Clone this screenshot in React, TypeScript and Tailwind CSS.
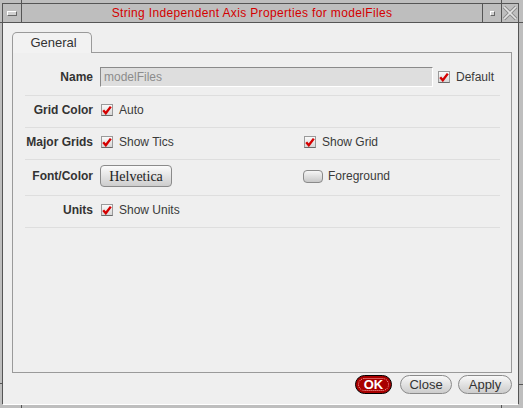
import React from 'react';

const dark = 'bg-[#555555]';

function Check() {
    return (
        <span className="inline-flex w-[12px] h-[12px] border border-[#9a9a9a] border-b-[#6a6a6a] bg-gradient-to-b from-[#fafafa] to-[#d6d6d6] items-center justify-center">
            <svg width="10" height="10" viewBox="0 0 10 10">
                <path d="M1.2 5.2 L3.8 8.2 L8.8 1.6" fill="none" stroke="#d40000" strokeWidth="2.4" />
            </svg>
        </span>
    );
}

function CheckItem({ label }: { label: string }) {
    return (
        <div className="flex items-center">
            <span className="ml-px"><Check /></span>
            <span className="ml-[6px] text-[12px] text-[#3a3a3a]">{label}</span>
        </div>
    );
}

function Row({ label, children, h = 'h-[32px]' }: { label: string; children: React.ReactNode; h?: string }) {
    return (
        <div className={`flex items-center ${h} pb-[3px] border-b border-[#dedede]`}>
            <div className="w-[68px] text-right text-[12px] font-bold text-[#333]">{label}</div>
            <div className="ml-[7px] flex-1 flex items-center">{children}</div>
        </div>
    );
}

export default function App() {
    return (
        <div className="w-[523px] h-[408px] bg-[#bebebe] flex flex-col overflow-hidden font-['Liberation_Sans',Arial,sans-serif]">
            {/* top frame strip */}
            <div className="h-[3px] flex">
                <div className="w-[21px]" />
                <div className={`w-px ${dark}`} />
                <div className="w-[479px]" />
                <div className={`w-px ${dark}`} />
            </div>

            {/* title bar */}
            <div className="h-[20px] flex border-b border-[#555555]">
                <div className="w-[2px]" />
                <div className="w-[517px] flex border-t border-l border-r border-[#555555]">
                    <div className="w-[18px] flex items-center justify-center">
                        <div className="w-[10px] h-[5px] border border-t-white border-l-white border-b-[#666] border-r-[#666] bg-[#d0d0d0]" />
                    </div>
                    <div className={`w-px ${dark}`} />
                    <div className="w-[460px] flex items-center justify-center text-[12px] text-[#d40000] tracking-[0.35px]">
                        String Independent Axis Properties for modelFiles
                    </div>
                    <div className={`w-px ${dark}`} />
                    <div className="w-[18px] flex items-center justify-center">
                        <div className="w-[5px] h-[5px] border border-t-white border-l-white border-b-[#666] border-r-[#666] bg-[#d0d0d0]" />
                    </div>
                    <div className={`w-px ${dark}`} />
                    <div className="w-[16px] flex items-center justify-center">
                        <svg width="16" height="16" viewBox="0 0 16 16">
                            <path d="M2 2 L14 14 M14 2 L2 14" stroke="#8a8a8a" strokeWidth="3.4" />
                            <path d="M2 2 L14 14 M14 2 L2 14" stroke="#e4e4e4" strokeWidth="1.6" />
                        </svg>
                    </div>
                </div>
            </div>

            {/* main */}
            <div className="h-[381px] flex">
                <div className="w-[2px] flex flex-col">
                    <div className="h-[360px]" />
                    <div className={`h-px ${dark}`} />
                </div>
                <div className={`w-px ${dark}`} />
                <div className="w-[515px] bg-[#efefef] flex flex-col pl-[9px] pt-[9px] pr-[6px]">
                    {/* tab header */}
                    <div className="flex h-[21px]">
                        <div className="w-[80px] h-[21px] border border-b-0 border-[#9a9a9a] rounded-t-[5px] bg-[#f2f2f2] flex items-center justify-center text-[13px] text-[#333] pl-[3px]">
                            General
                        </div>
                        <div className="flex-1 border-b border-[#9a9a9a]" />
                    </div>
                    {/* panel */}
                    <div className="h-[320px] border border-t-0 border-[#9a9a9a] pt-[9px] pl-[12px] pr-[11px]">
                        <Row label="Name" h="h-[34px]">
                            <div className="w-[333px] h-[20px] bg-[#dedede] border border-t-[#8a8a8a] border-l-[#8a8a8a] border-b-white border-r-white flex items-center pl-[3px] text-[12px] text-[#8c8c8c]">
                                modelFiles
                            </div>
                            <div className="ml-[4px]">
                                <CheckItem label="Default" />
                            </div>
                        </Row>
                        <Row label="Grid Color">
                            <CheckItem label="Auto" />
                        </Row>
                        <Row label="Major Grids">
                            <div className="w-[203px]">
                                <CheckItem label="Show Tics" />
                            </div>
                            <CheckItem label="Show Grid" />
                        </Row>
                        <Row label="Font/Color" h="h-[36px]">
                            <div className="w-[203px]">
                                <button className="w-[72px] h-[22px] rounded-[4px] border border-[#8a8a8a] bg-gradient-to-b from-[#fbfbfb] to-[#cdcdcd] text-[14px] text-[#222] font-['Liberation_Serif',serif] flex items-center justify-center">
                                    Helvetica
                                </button>
                            </div>
                            <div className="flex items-center">
                                <span className="w-[20px] h-[13px] rounded-[4px] border border-[#8a8a8a] bg-gradient-to-b from-[#f6f6f6] to-[#c8c8c8]" />
                                <span className="ml-[5px] text-[12px] text-[#3a3a3a]">Foreground</span>
                            </div>
                        </Row>
                        <Row label="Units">
                            <CheckItem label="Show Units" />
                        </Row>
                    </div>
                    {/* buttons */}
                    <div className="flex justify-end mt-[2px] gap-[6px]">
                        <button className="w-[37px] h-[19px] mr-[2px] rounded-full bg-[#a80000] border border-black flex items-center justify-center p-[2px]">
                            <span className="w-full h-full rounded-full border border-dotted border-[#ffb0b0] flex items-center justify-center text-white font-bold text-[13px] leading-none">OK</span>
                        </button>
                        <button className="w-[52px] h-[19px] rounded-full border border-[#8a8a8a] bg-gradient-to-b from-[#f8f8f8] to-[#cccccc] text-[13px] text-[#333] flex items-center justify-center leading-none">
                            Close
                        </button>
                        <button className="w-[54px] h-[19px] rounded-full border border-[#8a8a8a] bg-gradient-to-b from-[#f8f8f8] to-[#cccccc] text-[13px] text-[#333] flex items-center justify-center leading-none">
                            Apply
                        </button>
                    </div>
                </div>
                <div className={`w-px ${dark}`} />
                <div className="w-[4px] flex flex-col">
                    <div className="h-[361px]" />
                    <div className={`h-px ${dark}`} />
                </div>
            </div>

            {/* bottom frame strip */}
            <div className="h-[4px] flex flex-col">
                <div className="h-px flex">
                    <div className="w-[3px]" />
                    <div className="w-[515px] bg-white" />
                </div>
                <div className="h-[3px] flex">
                    <div className="w-[21px]" />
                    <div className={`w-px ${dark}`} />
                    <div className="w-[479px]" />
                    <div className={`w-px ${dark}`} />
                </div>
            </div>
        </div>
    );
}
